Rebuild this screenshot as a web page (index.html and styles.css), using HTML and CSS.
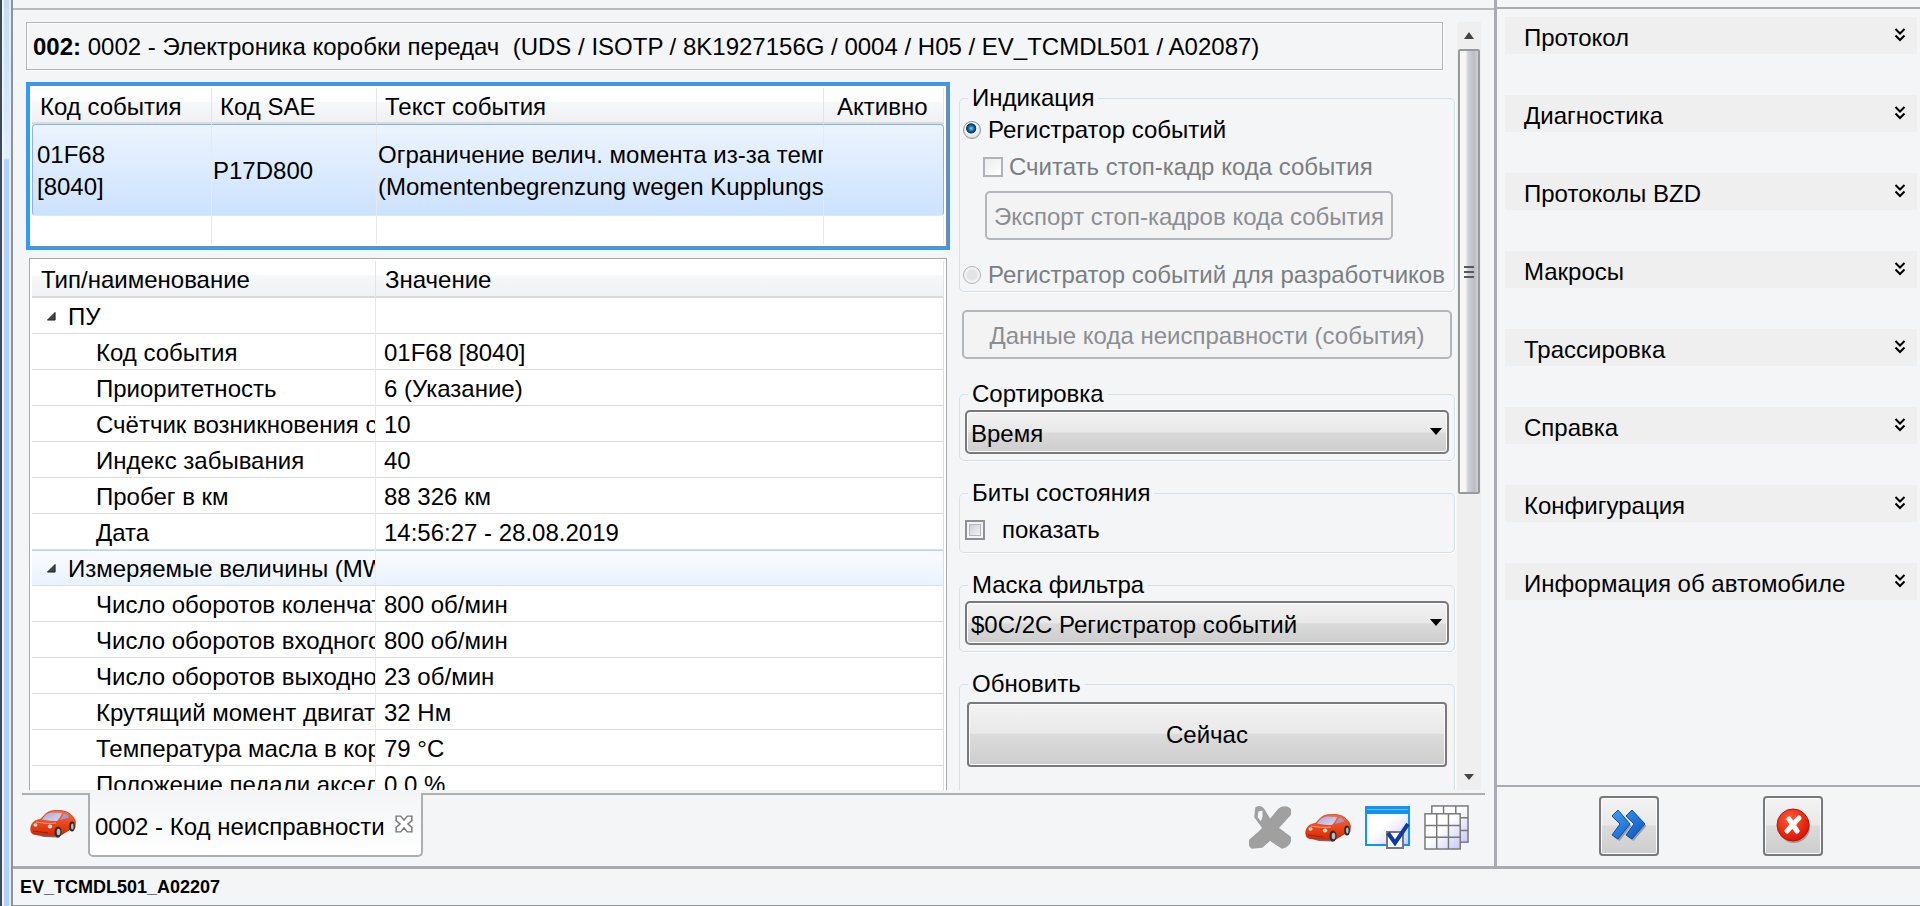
FILE: index.html
```html
<!DOCTYPE html>
<html lang="ru">
<head>
<meta charset="utf-8">
<title>0002 - Код неисправности</title>
<link rel="stylesheet" href="styles.css">
</head>
<body>
<svg class="defs" aria-hidden="true">
  <defs>
    <linearGradient id="carBody" x1="0" y1="0" x2="0" y2="1"><stop offset="0" stop-color="#ff6a3c"/><stop offset="1" stop-color="#d62800"/></linearGradient>
    <linearGradient id="carGlass" x1="0" y1="0" x2="1" y2="1"><stop offset="0" stop-color="#a9a4d6"/><stop offset="1" stop-color="#d9dcfa"/></linearGradient>
    <linearGradient id="sheet" x1="0" y1="0" x2="1" y2="1"><stop offset=".45" stop-color="#fff"/><stop offset="1" stop-color="#c8c8fa"/></linearGradient>
    <linearGradient id="blueArrow" x1="0" y1="0" x2="1" y2="1"><stop offset="0" stop-color="#3fa0f5"/><stop offset="1" stop-color="#0a50c0"/></linearGradient>
    <radialGradient id="redBall" cx=".4" cy=".3" r=".7"><stop offset="0" stop-color="#ff5a3a"/><stop offset="1" stop-color="#dd1400"/></radialGradient>
    <symbol id="car" viewBox="0 0 46 28">
      <path d="M3 24 L14 27 L28 27.500 L33 24 L45 17 L44 12 Z" fill="#4a3a38" opacity=".75"/>
      <path d="M1 21 C0 17 2 12 6 10.500 L11 9 C14 5 17 2 21 1 C26 0 33 0 37 2 C41 4 45 8 45.500 12 L45 18 L39 20 L31 25 L25 25.500 L5 24.500 C2 24 1 23 1 21 Z" fill="url(#carBody)" stroke="#c02a08" stroke-width=".6"/>
      <path d="M12 9.500 C15 5 18 3 22 2.500 L32 3 C31 6 29 9 27 11 C22 11 17 10.500 12 9.500 Z" fill="url(#carGlass)"/>
      <path d="M30 10 L34 3.500 C37 3.500 38 5 39 7.500 Z" fill="#a39bd0"/>
      <path d="M6 12 C13 13 20 14 26 13" fill="none" stroke="#ff9a78" stroke-width="1"/>
      <ellipse cx="5.500" cy="15" rx="2" ry="1.800" fill="#ffd9cf"/>
      <ellipse cx="20" cy="16.500" rx="2.200" ry="1.900" fill="#ffd9cf"/>
      <path d="M3 21 L18 23" stroke="#a01c00" stroke-width="1.200"/>
      <ellipse cx="28" cy="22" rx="3.500" ry="5.500" fill="#2c2c2e"/>
      <ellipse cx="28.500" cy="22" rx="1.800" ry="3.300" fill="#b9bdc2"/>
      <ellipse cx="42" cy="16.500" rx="2.800" ry="5" fill="#2c2c2e"/>
      <ellipse cx="42.300" cy="16.500" rx="1.300" ry="2.900" fill="#b9bdc2"/>
    </symbol>
    <symbol id="chev" viewBox="0 0 12 14">
      <path d="M1.500 1 L6 5.500 L10.500 1 M1.500 7.500 L6 12 L10.500 7.500" fill="none" stroke="#000" stroke-width="2"/>
    </symbol>
    <symbol id="twist" viewBox="0 0 10 10"><path d="M9 .5 V9 H.5 Z" fill="#444" stroke="#1e1e1e"/></symbol>
  </defs>
</svg>

<div class="window">
  <div class="frame-edge"></div>
  <div class="client">
    <div class="upper">
      <main class="main">
        <div class="workspace">
          <div class="left">
            <h1 class="unit"><b>002:</b> 0002 - Электроника коробки передач&nbsp; (UDS / ISOTP / 8K1927156G / 0004 / H05 / EV_TCMDL501 / A02087)</h1>
            <div class="columns">
              <div class="tables">
                <div class="events">
                  <table class="grid events-grid">
                    <colgroup><col class="c-code"><col class="c-sae"><col><col class="c-active"></colgroup>
                    <thead><tr><th>Код события</th><th>Код SAE</th><th>Текст события</th><th class="last">Активно</th></tr></thead>
                    <tbody>
                      <tr class="selected"><td class="first">01F68<br>[8040]</td><td>P17D800</td><td>Ограничение велич. момента из-за температуры<br>(Momentenbegrenzung wegen Kupplungstemperatur)</td><td></td></tr>
                      <tr class="blank"><td></td><td></td><td></td><td></td></tr>
                    </tbody>
                  </table>
                </div>
                <div class="details">
                  <table class="grid details-grid">
                    <colgroup><col class="c-name"><col></colgroup>
                    <thead><tr><th>Тип/наименование</th><th>Значение</th></tr></thead>
                    <tbody>
                      <tr class="node"><td><svg class="twist"><use href="#twist"/></svg>ПУ</td><td></td></tr>
                      <tr><td>Код события</td><td>01F68 [8040]</td></tr>
                      <tr><td>Приоритетность</td><td>6 (Указание)</td></tr>
                      <tr><td>Счётчик возникновения события</td><td>10</td></tr>
                      <tr><td>Индекс забывания</td><td>40</td></tr>
                      <tr><td>Пробег в км</td><td>88 326 км</td></tr>
                      <tr><td>Дата</td><td>14:56:27 - 28.08.2019</td></tr>
                      <tr class="node hover"><td><svg class="twist"><use href="#twist"/></svg>Измеряемые величины (MW)</td><td></td></tr>
                      <tr><td>Число оборотов коленчатого вала</td><td>800 об/мин</td></tr>
                      <tr><td>Число оборотов входного вала</td><td>800 об/мин</td></tr>
                      <tr><td>Число оборотов выходного вала</td><td>23 об/мин</td></tr>
                      <tr><td>Крутящий момент двигателя</td><td>32 Нм</td></tr>
                      <tr><td>Температура масла в коробке</td><td>79 °C</td></tr>
                      <tr><td>Положение педали акселератора</td><td>0.0 %</td></tr>
                    </tbody>
                  </table>
                </div>
              </div>
              <form class="options">
                <fieldset class="group display">
                  <legend>Индикация</legend>
                  <label class="line"><input type="radio" name="rec" checked>Регистратор событий</label>
                  <label class="line sub off"><input type="checkbox" disabled>Считать стоп-кадр кода события</label>
                  <button type="button" class="flat export" disabled>Экспорт стоп-кадров кода события</button>
                  <label class="line off"><input type="radio" name="rec" disabled>Регистратор событий для разработчиков</label>
                </fieldset>
                <button type="button" class="flat data" disabled>Данные кода неисправности (события)</button>
                <fieldset class="group">
                  <legend>Сортировка</legend>
                  <select aria-label="Сортировка"><option>Время</option></select>
                </fieldset>
                <fieldset class="group bits">
                  <legend>Биты состояния</legend>
                  <label class="line wide"><input type="checkbox">показать</label>
                </fieldset>
                <fieldset class="group">
                  <legend>Маска фильтра</legend>
                  <select aria-label="Маска фильтра"><option>$0C/2C Регистратор событий</option></select>
                </fieldset>
                <fieldset class="group update">
                  <legend>Обновить</legend>
                  <button type="button" class="glossy now">Сейчас</button>
                </fieldset>
              </form>
            </div>
          </div>
          <div class="scrollbar">
            <svg class="arrow" viewBox="0 0 10 8"><path d="M0 7 L5 0 L10 7 Z" fill="#444"/></svg>
            <div class="thumb"><i></i><i></i><i></i></div>
            <svg class="arrow end" viewBox="0 0 10 8"><path d="M0 1 L5 7 L10 1 Z" fill="#444"/></svg>
          </div>
        </div>
        <div class="tabbar">
          <svg class="car"><use href="#car"/></svg>
          <div class="tab">0002 - Код неисправности
            <button type="button" class="close" aria-label="Закрыть"><svg viewBox="0 0 16 16"><path d="M1 1 H5 L8 4.500 L11 1 H15 V5 L11.500 8 L15 11 V15 H11 L8 11.500 L5 15 H1 V11 L4.500 8 L1 5 Z" fill="#fff" stroke="#777" stroke-width="1.300"/></svg></button>
          </div>
          <div class="tools">
            <svg class="t-x" viewBox="0 0 42 43"><path d="M7 2 Q12 -1 15 4 L21 14 L30 3 Q36 -1 41 3 Q43 8 39 11 L29 22 L41 31 Q43 37 36 41 L33 42 L21 34 L13 41 L3 42 Q-1 39 1 34 L10 26 L14 22 L6 11 Z" fill="#a0a0a0" stroke="#a0a0a0" stroke-width="1.500"/><path d="M8 11 L9 5 L14 4 L14 11 L12 16 Z" fill="#f3f5f7" stroke="#a0a0a0"/></svg>
            <svg class="car"><use href="#car"/></svg>
            <svg class="t-win" viewBox="0 0 45 43"><rect x="1" y="1" width="43" height="38" fill="url(#sheet)" stroke="#0a96ff" stroke-width="2"/><rect x="1" y="1" width="43" height="7" fill="#1492f0"/><path d="M2 3.500 H43" stroke="#6cc4ff"/><rect x="22" y="26" width="16" height="16" fill="#fff" stroke="#777" stroke-width="2"/><path d="M23 27 L30 37 L43 18" fill="none" stroke="#0b3aa8" stroke-width="4"/></svg>
            <svg class="t-grid" viewBox="0 0 46 46"><g stroke="#777" stroke-width="1.500"><rect x="8" y="1" width="37" height="37" fill="url(#sheet)"/><path d="M20 1 V10 M32.500 1 V10 M37 13 H45 M37 26 H45"/><rect x="1" y="9" width="36" height="36" fill="url(#sheet)"/><path d="M13 9 V45 M25 9 V45 M1 21 H37 M1 33 H37"/></g></svg>
          </div>
        </div>
      </main>
      <aside class="side">
        <nav class="menu">
          <button type="button">Протокол<svg><use href="#chev"/></svg></button>
          <button type="button">Диагностика<svg><use href="#chev"/></svg></button>
          <button type="button">Протоколы BZD<svg><use href="#chev"/></svg></button>
          <button type="button">Макросы<svg><use href="#chev"/></svg></button>
          <button type="button">Трассировка<svg><use href="#chev"/></svg></button>
          <button type="button">Справка<svg><use href="#chev"/></svg></button>
          <button type="button">Конфигурация<svg><use href="#chev"/></svg></button>
          <button type="button">Информация об автомобиле<svg><use href="#chev"/></svg></button>
        </nav>
        <div class="actions">
          <button type="button" class="glossy act" aria-label="Далее"><svg viewBox="0 0 36 34"><g fill="#777" opacity=".6" transform="translate(1.500 2)"><path d="M1 7 L7 1 L19 15 L7 30 L1 26 L9 15 Z M15 7 L21 1 L34 15 L21 30 L15 26 L23 15 Z"/></g><path d="M1 7 L7 1 L19 15 L7 30 L1 26 L9 15 Z M15 7 L21 1 L34 15 L21 30 L15 26 L23 15 Z" fill="url(#blueArrow)" stroke="#0b4fa8"/></svg></button>
          <button type="button" class="glossy act" aria-label="Отмена"><svg viewBox="0 0 36 36"><circle cx="19" cy="19" r="16" fill="#777" opacity=".6"/><circle cx="18" cy="17" r="16" fill="url(#redBall)" stroke="#b81400"/><path d="M14 11 L22 23 M24 10 L12 23" stroke="#fff" stroke-width="5" stroke-linecap="round"/></svg></button>
        </div>
      </aside>
    </div>
    <footer class="status">EV_TCMDL501_A02207</footer>
  </div>
</div>
</body>
</html>
```
FILE: styles.css
```css
* { box-sizing: border-box; }

body {
  margin: 0;
  background: #f3f5f7;
  color: #000;
  font: 24px/32px "Liberation Sans", Arial, sans-serif;
}

button, select { font: inherit; color: inherit; margin: 0; }

.defs { position: absolute; width: 0; height: 0; }

.window { display: flex; height: 100vh; overflow: hidden; }

.frame-edge {
  flex: none;
  width: 13px;
  border-left: 2px solid #3c4a5c;
  border-right: 2px solid #8d939b;
  background: linear-gradient(#c4dcf6, #d4e6fa 100px, #e4effb 158px, #b0d2f8 160px);
  box-shadow: inset 2px 0 #eef5fc, inset -2px 0 #e4edf7;
}

.client { flex: 1; min-width: 0; display: flex; flex-direction: column; }
.upper { flex: 1; min-height: 0; display: flex; }

/* Main area */
.main {
  flex: 1;
  min-width: 0;
  display: flex;
  flex-direction: column;
  margin-top: 8px;
  border-top: 2px solid #b9bcc0;
}
.workspace { flex: 1; min-height: 0; display: flex; gap: 2px; padding: 12px 13px 0 13px; overflow: hidden; }
.left { flex: 1; min-width: 0; display: flex; flex-direction: column; gap: 12px; }

.unit {
  margin: 0 12px 0 0;
  padding: 7px 6px 5px;
  border: 1px solid #b2b4b8;
  box-shadow: inset 1px 1px #fff, 1px 1px #fff;
  font-size: 24px;
  font-weight: 400;
  line-height: 34px;
  white-space: nowrap;
  overflow: hidden;
}

.columns { flex: 1; min-height: 0; display: flex; gap: 9px; }
.tables { flex: 1; min-width: 0; display: flex; flex-direction: column; gap: 8px; }

/* Tables */
.grid { width: 100%; border-collapse: separate; border-spacing: 0; table-layout: fixed; background: #fff; }
.grid th, .grid td { padding: 0; text-align: left; font-weight: 400; white-space: nowrap; overflow: hidden; }
.grid th {
  padding: 2px 9px 0;
  line-height: 31px;
  border-right: 1px solid #e2e4e8;
  border-bottom: 2px solid #d9dbde;
  background: linear-gradient(#fff 40%, #f7f8fa 42%, #eff1f3);
}
.grid td { border-right: 1px solid #e8e9ec; }

.events {
  border: 3px solid #3399ff;
  outline: 1px solid #848a92;
  outline-offset: -4px;
  padding: 3px;
  background: #fff;
}
.c-code { width: 180px; }
.c-sae { width: 165px; }
.c-active { width: 120px; }
.c-name { width: 344px; }
.events-grid th { height: 36px; padding-left: 8px; }
.events-grid .last { padding-left: 13px; padding-right: 0; }
.selected td {
  height: 92px;
  padding-top: 2px;
  padding-left: 1px;
  border-top: 1px solid #84b4ee;
  border-bottom: 1px solid #dbe8f7;
  background: linear-gradient(#ecf4fe, #cce2fe);
}
.selected .first { padding-left: 4px; border-left: 1px solid #84b4ee; border-radius: 4px 0 0 4px; }
.selected td:last-child { border-right: 1px solid #84b4ee; border-radius: 0 4px 4px 0; }
.blank td { height: 28px; }

.details {
  flex: 1;
  min-height: 0;
  margin: 0 3px;
  padding: 2px 2px 0;
  border: 1px solid #a6a9ae;
  border-bottom: 0;
  background: #fff;
  overflow: hidden;
}
.details-grid th { height: 37px; }
.details-grid td { height: 36px; padding: 3px 0 1px 8px; line-height: 31px; border-bottom: 1px solid #dcdde0; }
.details-grid td:first-child { padding-left: 64px; }
.details-grid .node td:first-child { padding-left: 15px; }
.details-grid td:last-child { border-right-color: #dcdde0; }
.hover td { background: linear-gradient(#fafcff, #e9f3fd); box-shadow: inset 0 1px #b8d6f8; }
.twist { width: 9px; height: 9px; margin-right: 12px; vertical-align: 4px; }

/* Options */
.options { flex: none; width: 496px; }
.group {
  min-width: 0;
  margin: 0 0 16px;
  padding: 0 5px 6px;
  border: 1px solid #d5e1ea;
  border-radius: 5px;
  box-shadow: 1px 1px #fff;
}
.group legend { margin-left: 3px; padding: 0 4px; line-height: 32px; }
.display { padding: 0 3px; margin-bottom: 18px; }
.display legend { margin-left: 5px; }

.line { display: flex; align-items: center; gap: 7px; height: 32px; white-space: nowrap; }
.line.sub { gap: 6px; margin: 5px 0 0 20px; }
.line.wide { gap: 17px; margin-top: 5px; }
.off { color: #7b7e82; }

input { appearance: none; flex: none; margin: 0; border: 1px solid #8d9197; background: #f4f4f4; }
input[type=radio] {
  width: 18px;
  height: 18px;
  border-radius: 50%;
  background: radial-gradient(circle, #f7f7f7 50%, #cfd2d6);
}
input[type=radio]:checked {
  background: radial-gradient(circle at 45% 40%, #6fd4ff 0, #1572a8 20%, #0c3350 36%, #f4f4f4 42%, #dfe2e5 70%);
}
input[type=checkbox] {
  width: 20px;
  height: 20px;
  border-width: 2px;
  background: linear-gradient(135deg, #c2c7cf, #fdfdfd);
  box-shadow: inset 0 0 0 2px #f4f4f4, inset 0 0 0 3px #b4b8be;
}
input:disabled { border-color: #b0b3b7; }
input[type=radio]:disabled { background: radial-gradient(circle, #e4e4e4 40%, #f4f4f4 60%); }
input[type=checkbox]:disabled { background: linear-gradient(135deg, #ececec, #fff); box-shadow: none; }

.flat {
  display: block;
  height: 49px;
  padding: 3px 0 0;
  border: 2px solid #b3b6ba;
  border-radius: 5px;
  background: #f3f3f3;
  color: #8b8e93;
  white-space: nowrap;
}
.export { width: 408px; margin: 8px 0 19px 22px; }
.data { width: 490px; margin: 0 0 19px 3px; }

select {
  display: block;
  width: 100%;
  height: 44px;
  padding: 4px 4px 0;
  appearance: none;
  border: 2px solid #77797c;
  border-radius: 5px;
  box-shadow: inset 0 0 0 1px #fbfbfb;
  background: linear-gradient(#f2f2f2, #e8e8e8 50%, #dadada 52%, #cdcdcd);
}
.group:has(select) { position: relative; }
.group:has(select)::after {
  content: "";
  position: absolute;
  right: 12px;
  bottom: 25px;
  border: 6px solid transparent;
  border-top: 7px solid #000;
  border-bottom: 0;
}

.glossy {
  border: 2px solid #77797c;
  border-radius: 4px;
  box-shadow: inset 0 0 0 1px #fbfbfb;
  background: linear-gradient(#f3f3f3, #e9e9e9 48%, #dbdbdb 50%, #cecece);
}
.update { padding: 2px 7px 60px; }
.update legend { margin-left: 1px; }
.now { display: block; width: 100%; height: 65px; }

/* Scroll bar */
.scrollbar {
  flex: none;
  width: 24px;
  display: flex;
  flex-direction: column;
  align-items: center;
  background: #efeff0;
}
.arrow { width: 10px; height: 8px; margin: 10px 0 9px; }
.arrow.end { margin: auto 0 9px; }
.thumb {
  width: 22px;
  height: 58%;
  display: flex;
  flex-direction: column;
  align-items: center;
  justify-content: center;
  gap: 3px;
  border: 2px solid #97999d;
  border-radius: 2px;
  background: linear-gradient(90deg, #f6f6f6 30%, #d0d1d6 45%, #bcbdc3 80%, #d0d0d4);
}
.thumb i { width: 10px; height: 2px; background: #55585c; }

/* Tabs */
.tabbar {
  flex: none;
  display: flex;
  align-items: flex-start;
  height: 73px;
  margin: 3px 9px 0 9px;
  border-top: 2px solid #acaeb1;
}
.car { width: 46px; height: 28px; }
.tabbar > .car { margin: 15px 12px 0 8px; }
.tab {
  display: flex;
  align-items: center;
  gap: 10px;
  height: 64px;
  margin-top: -2px;
  padding: 5px 8px 0 5px;
  border: 2px solid #acaeb1;
  border-top: 0;
  border-radius: 0 0 5px 5px;
  background: linear-gradient(#f3f5f7, #fff);
  white-space: nowrap;
}
.close { width: 18px; height: 18px; padding: 0; border: 0; background: none; display: flex; margin-bottom: 5px; }
.close svg { width: 18px; height: 18px; }
.tools { margin: 10px 16px 0 auto; display: flex; align-items: center; gap: 14px; }
.t-x { width: 42px; height: 43px; }
.t-win { width: 45px; height: 43px; }
.t-grid { width: 45px; height: 45px; }

/* Side panel */
.side {
  flex: none;
  width: 426px;
  display: flex;
  flex-direction: column;
  border-left: 3px solid #a9abb3;
}
.menu {
  flex: 1;
  display: flex;
  flex-direction: column;
  gap: 41px;
  margin-top: 7px;
  padding: 8px 3px 0 8px;
  border-top: 2px solid #a9abb3;
}
.menu button {
  display: flex;
  align-items: center;
  justify-content: space-between;
  height: 37px;
  padding: 4px 11px 0 19px;
  border: 0;
  background: #efefef;
}
.menu svg { width: 12px; height: 14px; margin-bottom: 6px; }
.actions {
  flex: none;
  height: 81px;
  display: flex;
  justify-content: center;
  gap: 104px;
  padding: 9px 0 0 5px;
  border-top: 2px solid #a9abb3;
}
.act { width: 60px; height: 60px; padding: 0; display: flex; align-items: center; justify-content: center; }
.act svg { width: 36px; height: 36px; }

.status {
  flex: none;
  height: 40px;
  padding-left: 7px;
  border-top: 3px solid #a9abb3;
  border-bottom: 1px solid #8d939b;
  font-size: 18px;
  font-weight: 700;
  line-height: 36px;
}
```
